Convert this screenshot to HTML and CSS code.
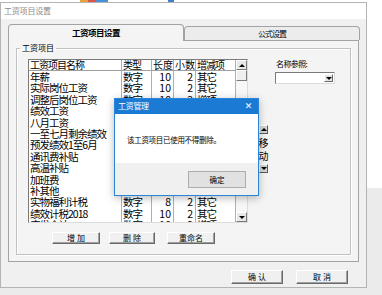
FILE: index.html
```html
<!DOCTYPE html>
<html lang="zh">
<head>
<meta charset="utf-8">
<title>工资项目设置</title>
<link rel="stylesheet" href="styles.css">
</head>
<body>
<div class="topstrip">
  <span class="blob b1"></span><span class="blob b2"></span><span class="blob b3"></span><span class="blob b4"></span>
</div>
<div class="window">
  <div class="titlebar">工资项目设置</div>
  <div class="winbody">
    <div class="tabs">
      <div class="tab active">工资项目设置</div>
      <div class="tab">公式设置</div>
    </div>
    <div class="panel">
      <fieldset class="group">
        <legend>工资项目</legend>
        <div class="grouprow">
          <div class="tablewrap">
            <div class="grid">
              <div class="c h">工资项目名称</div><div class="c h">类型</div><div class="c h r">长度</div><div class="c h r">小数</div><div class="c h">增减项</div>
              <div class="c">年薪</div><div class="c">数字</div><div class="c r">10</div><div class="c r">2</div><div class="c">其它</div>
              <div class="c">实际岗位工资</div><div class="c">数字</div><div class="c r">10</div><div class="c r">2</div><div class="c">其它</div>
              <div class="c">调整后岗位工资</div><div class="c">数字</div><div class="c r">10</div><div class="c r">2</div><div class="c">增项</div>
              <div class="c">绩效工资</div><div class="c">数字</div><div class="c r">10</div><div class="c r">2</div><div class="c">增项</div>
              <div class="c">八月工资</div><div class="c">数字</div><div class="c r">10</div><div class="c r">2</div><div class="c">增项</div>
              <div class="c">一至七月剩余绩效</div><div class="c">数字</div><div class="c r">10</div><div class="c r">2</div><div class="c">增项</div>
              <div class="c">预发绩效1至6月</div><div class="c">数字</div><div class="c r">10</div><div class="c r">2</div><div class="c">增项</div>
              <div class="c">通讯费补贴</div><div class="c">数字</div><div class="c r">10</div><div class="c r">2</div><div class="c">增项</div>
              <div class="c">高温补贴</div><div class="c">数字</div><div class="c r">10</div><div class="c r">2</div><div class="c">增项</div>
              <div class="c">加班费</div><div class="c">数字</div><div class="c r">10</div><div class="c r">2</div><div class="c">增项</div>
              <div class="c">补其他</div><div class="c">数字</div><div class="c r">10</div><div class="c r">2</div><div class="c">增项</div>
              <div class="c">实物福利计税</div><div class="c">数字</div><div class="c r">8</div><div class="c r">2</div><div class="c">其它</div>
              <div class="c">绩效计税2018</div><div class="c">数字</div><div class="c r">10</div><div class="c r">2</div><div class="c">其它</div>
              <div class="c">应发合计</div><div class="c">数字</div><div class="c r">10</div><div class="c r">2</div><div class="c">增项</div>
            </div>
            <div class="vscroll">
              <div class="sbtn"><span class="tri up"></span></div>
              <div class="thumb"></div>
              <div class="track"></div>
              <div class="sbtn"><span class="tri down"></span></div>
            </div>
          </div>
          <div class="move">
            <div class="mbtn"><span class="tri up"></span></div>
            <div class="mtext">移</div>
            <div class="mtext">动</div>
            <div class="mbtn"><span class="tri down"></span></div>
          </div>
          <div class="side">
            <div class="lbl">名称参照:</div>
            <div class="combo"><div class="cbtn"><span class="tri down"></span></div></div>
          </div>
        </div>
        <div class="btnrow">
          <div class="btn b-add">增 加</div>
          <div class="btn b-del">删 除</div>
          <div class="btn b-ren">重命名</div>
        </div>
      </fieldset>
    </div>
    <div class="footer">
      <div class="btn fbtn">确 认</div>
      <div class="btn fbtn">取 消</div>
    </div>
  </div>
</div>

<div class="dialog">
  <div class="dlg-title"><span>工资管理</span><span class="close">✕</span></div>
  <div class="dlg-body">该工资项目已使用不得删除。</div>
  <div class="dlg-foot"><div class="okbtn">确定</div></div>
</div>
</body>
</html>
```

FILE: styles.css
```css
* { box-sizing: border-box; }

html, body {
  margin: 0;
  padding: 0;
}

body {
  width: 382px;
  height: 295px;
  overflow: hidden;
  position: relative;
  background: linear-gradient(#ffffff 0, #ffffff 188px, #ebebeb 188px, #ebebeb 100%);
  font-family: "Noto Sans CJK SC", "Noto Sans", sans-serif;
  color: #000;
}

/* thin strip of other windows above */
.topstrip {
  height: 2px;
  display: flex;
}
.blob { height: 2px; display: block; }
.b1 { width: 8px; margin-left: 80px; background: #e8a23c; }
.b2 { width: 8px; background: #d9534f; }
.b3 { width: 12px; background: #4a8fd8; }
.b4 { width: 6px; margin-left: 60px; background: #3f7fd0; }

.window {
  width: 367px;
  height: 286px;
  border: 1px solid #b4b4b4;
  background: #f0f0f0;
  display: flex;
  flex-direction: column;
}

.titlebar {
  height: 16px;
  background: #fff;
  font-size: 8px;
  line-height: 15px;
  color: #8c8c8c;
  padding-left: 3px;
  letter-spacing: -0.2px;
}

.winbody {
  padding: 5px 6px 0 7px;
}

.tabs {
  display: flex;
  align-items: flex-end;
  height: 16px;
  position: relative;
  z-index: 1;
}

.tab {
  width: 176px;
  height: 14px;
  border: 1px solid #a3a3a3;
  border-bottom: none;
  border-radius: 4px 4px 0 0;
  background: #ececec;
  font-size: 8px;
  line-height: 13px;
  text-align: center;
  letter-spacing: -1px;
}
.tab.active {
  height: 17px;
  margin-bottom: -1px;
  background: #f4f4f4;
  font-weight: bold;
  font-size: 8.5px;
  letter-spacing: -0.5px;
  line-height: 15px;
}

.panel {
  width: 351px;
  height: 222px;
  border: 1px solid #a3a3a3;
  background: #f4f4f4;
  padding: 2px 0 0 7px;
}

.group {
  margin: 0;
  padding: 0;
  min-width: 0;
  width: 335px;
  height: 212px;
  border: 1px solid #c2c2c2;
  box-shadow: 1px 1px 0 #ffffff, inset 1px 1px 0 #ffffff;
}
.group legend {
  margin-left: 3px;
  padding: 0 2px;
  font-size: 8px;
  line-height: 10px;
  letter-spacing: 0;
}

.grouprow {
  display: flex;
  margin-top: 6px;
  padding-left: 11px;
  align-items: flex-start;
}

.tablewrap {
  width: 220px;
  height: 164px;
  border: 1px solid;
  border-color: #7a7a7a #dcdcdc #dcdcdc #7a7a7a;
  background: #fff;
  display: flex;
  overflow: hidden;
}

.grid {
  display: grid;
  grid-template-columns: 93px 30px 22px 22px 40px;
  grid-auto-rows: 11.4px;
  grid-template-rows: 11px;
  align-content: start;
}

.c {
  font-size: 10.5px;
  line-height: 11.4px;
  white-space: nowrap;
  padding: 0 1px;
  border-right: 1px solid #b0b0b0;
  letter-spacing: -1px;
}
.c.h {
  line-height: 10px;
  height: 11px;
  border-bottom: 1px solid #a0a0a0;
  font-size: 10px;
}
.c.r {
  text-align: right;
  padding-right: 2px;
  letter-spacing: 0;
}

.vscroll {
  width: 11px;
  height: 162px;
  background: #f0f0f0;
  display: flex;
  flex-direction: column;
}
.sbtn {
  height: 10px;
  border: 1px solid;
  border-color: #fff #7a7a7a #7a7a7a #fff;
  background: #e8e8e8;
  display: flex;
  align-items: center;
  justify-content: center;
}
.thumb {
  height: 11px;
  border: 1px solid;
  border-color: #fff #7a7a7a #7a7a7a #fff;
  background: #efefef;
}
.track { flex: 1; background: #f7f7f7; }

.tri {
  display: block;
  width: 0;
  height: 0;
  border-left: 3px solid transparent;
  border-right: 3px solid transparent;
}
.tri.up { border-bottom: 3px solid #000; }
.tri.down { border-top: 3px solid #000; }

.move {
  margin-left: 11px;
  margin-top: 66px;
  width: 9px;
  display: flex;
  flex-direction: column;
  align-items: center;
}
.mbtn {
  width: 9px;
  height: 9px;
  border: 1px solid;
  border-color: #fff #5a5a5a #5a5a5a #fff;
  background: #d4d4d4;
  display: flex;
  align-items: center;
  justify-content: center;
}
.mtext {
  font-size: 10px;
  line-height: 13px;
  width: 12px;
  text-align: center;
}
.mtext + .mbtn { margin-top: 2px; }
.mbtn + .mtext { margin-top: 2px; }

.side {
  margin-left: 7px;
  margin-top: 0;
}
.lbl {
  font-size: 8px;
  line-height: 10px;
  padding-left: 1px;
  letter-spacing: -0.6px;
}
.combo {
  margin-top: 3px;
  width: 60px;
  height: 12px;
  border: 1px solid;
  border-color: #7a7a7a #dcdcdc #dcdcdc #7a7a7a;
  background: #fff;
  display: flex;
  justify-content: flex-end;
  padding: 1px;
}
.cbtn {
  width: 9px;
  height: 8px;
  border: 1px solid;
  border-color: #fff #6a6a6a #6a6a6a #fff;
  background: #e4e4e4;
  display: flex;
  align-items: center;
  justify-content: center;
}

.btn {
  height: 12px;
  border: 1px solid;
  border-color: #ffffff #696969 #696969 #ffffff;
  box-shadow: inset -1px -1px 0 #a0a0a0;
  background: #f0f0f0;
  font-size: 8px;
  line-height: 10px;
  text-align: center;
}

.btnrow {
  display: flex;
  margin-top: 9px;
  padding-left: 35px;
}
.b-add { width: 48px; }
.b-del { width: 46px; margin-left: 9px; }
.b-ren { width: 48px; margin-left: 12px; }

.footer {
  display: flex;
  justify-content: flex-end;
  padding-right: 12px;
  margin-top: 8px;
}
.fbtn {
  width: 52px;
  height: 14px;
  line-height: 12px;
}
.fbtn + .fbtn { margin-left: 13px; }

/* modal message box overlay */
.dialog {
  position: absolute;
  left: 114px;
  top: 98px;
  width: 145px;
  height: 98px;
  border: 1px solid #2a84d8;
  background: #fff;
  box-shadow: 0 2px 8px rgba(0, 0, 0, 0.28);
  display: flex;
  flex-direction: column;
}
.dlg-title {
  height: 15px;
  background: #1a7ad4;
  color: #fff;
  font-size: 8px;
  line-height: 14px;
  padding: 0 6px 0 3px;
  display: flex;
  justify-content: space-between;
  letter-spacing: -0.3px;
}
.close {
  font-family: "DejaVu Sans", sans-serif;
  font-size: 9px;
  line-height: 14px;
}
.dlg-body {
  height: 49px;
  font-size: 7.5px;
  line-height: 10px;
  padding: 21px 0 0 12px;
  letter-spacing: -0.3px;
}
.dlg-foot {
  flex: 1;
  background: #f0f0f0;
  display: flex;
  justify-content: flex-end;
  padding: 8px 12px 0 0;
}
.okbtn {
  width: 58px;
  height: 17px;
  border: 1px solid #adadad;
  background: #e1e1e1;
  font-size: 7.5px;
  line-height: 15px;
  text-align: center;
}
```
